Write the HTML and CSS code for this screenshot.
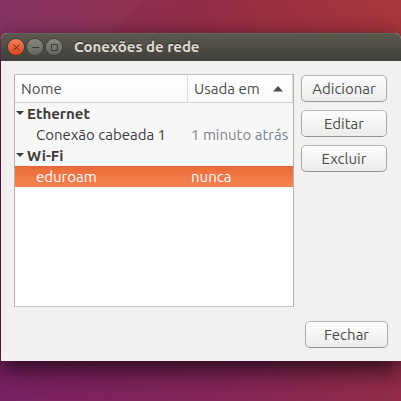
FILE: index.html
```html
<!DOCTYPE html>
<html lang="pt-BR">
<head>
<meta charset="utf-8">
<title>Conexões de rede</title>
<link rel="stylesheet" href="styles.css">
</head>
<body>
<svg class="wallpaper-ray" viewBox="0 0 143 60" aria-hidden="true"><path d="M0 0H143L83 60H0Z" fill="#fff" fill-opacity=".02"/></svg>
<main class="window">
  <header class="titlebar">
    <button class="control control-close" type="button" aria-label="Fechar janela">
      <svg viewBox="0 0 16 16"><path d="M5.500 5.500l6 6M11.500 5.500l-6 6"/></svg>
    </button>
    <button class="control" type="button" aria-label="Minimizar">
      <svg viewBox="0 0 16 16"><path d="M5 8.500h7"/></svg>
    </button>
    <button class="control" type="button" aria-label="Maximizar">
      <svg viewBox="0 0 16 16"><path d="M5.500 5.500h6v6h-6z"/></svg>
    </button>
    <h1 class="title">Conexões de rede</h1>
  </header>
  <div class="content">
    <div class="panel">
      <div class="list">
        <table class="connections">
          <colgroup><col><col class="col-used"></colgroup>
          <thead>
            <tr>
              <th scope="col">Nome</th>
              <th scope="col" aria-sort="ascending"><span class="sort">Usada em<svg viewBox="0 0 10 6"><path d="M0 5.500L5 0l5 5.500z"/></svg></span></th>
            </tr>
          </thead>
          <tbody>
            <tr class="group"><td colspan="2"><svg viewBox="0 0 8 4"><path d="M0 0h8L4 4z"/></svg>Ethernet</td></tr>
            <tr><td class="name">Conexão cabeada 1</td><td class="used">1 minuto atrás</td></tr>
            <tr class="group"><td colspan="2"><svg viewBox="0 0 8 4"><path d="M0 0h8L4 4z"/></svg>Wi-Fi</td></tr>
            <tr class="selected"><td class="name">eduroam</td><td class="used">nunca</td></tr>
          </tbody>
        </table>
      </div>
      <div class="actions">
        <button class="button" type="button">Adicionar</button>
        <button class="button" type="button">Editar</button>
        <button class="button" type="button">Excluir</button>
      </div>
    </div>
    <footer class="footer">
      <button class="button button-close" type="button">Fechar</button>
    </footer>
  </div>
</main>
</body>
</html>
```
FILE: styles.css
```css
* {
  box-sizing: border-box;
}

body {
  display: flex;
  flex-direction: column;
  min-height: 100vh;
  margin: 0;
  padding: 33px 0 40px 1px;
  overflow: hidden;
  background:
    linear-gradient(90deg, #84305f 0%, #922d47 50%, #a8353b 100%) top / 100% 62px no-repeat,
    linear-gradient(90deg, #7a2163 0%, #802556 50%, #922c48 100%);
  color: #3c3c3c;
  font: 15px/20px "Ubuntu", "Noto Sans", "Open Sans", sans-serif;
}

.wallpaper-ray {
  position: absolute;
  top: 0;
  left: 0;
  width: 143px;
  height: 60px;
}

.window {
  position: relative;
  display: flex;
  flex: 1;
  flex-direction: column;
  border-radius: 6px 6px 0 0;
  background: #f2f1f0;
  box-shadow: 0 8px 24px rgba(20, 5, 15, 0.85);
}

.titlebar {
  display: flex;
  align-items: center;
  gap: 3px;
  height: 28px;
  padding: 0 7px 1px;
  border-top: 1px solid #67655c;
  border-radius: 6px 6px 0 0;
  background: linear-gradient(#5b594f, #403f3a);
}

.control {
  width: 16px;
  height: 16px;
  padding: 0;
  border: 0;
  border-radius: 50%;
  background: linear-gradient(#888780, #65645e);
  box-shadow: 0 0 0 1px #403f39;
}

.control-close {
  background: linear-gradient(#f37f5b, #dc4717);
}

.control svg {
  display: block;
  fill: none;
  stroke: #3c3b37;
  stroke-width: 1;
}

.control-close svg {
  stroke: #4b2419;
}

.title {
  margin: 0 0 0 9px;
  color: #dfdbd2;
  font-size: 15px;
  line-height: 20px;
  text-shadow: 0 -1px #302f2b;
}

.content {
  display: flex;
  flex: 1;
  flex-direction: column;
  gap: 14px;
  padding: 13px;
}

.panel {
  display: flex;
  flex: 1;
  gap: 7px;
}

.list {
  flex: 1;
  border: 1px solid;
  border-color: #c5c3c0 #b4b2af #c9c7c5;
  background: #fff;
}

.connections {
  width: 100%;
  border-collapse: separate;
  border-spacing: 0;
  table-layout: fixed;
  background: #f7f7f7;
}

.col-used {
  width: 105px;
}

th {
  height: 28px;
  padding: 0 6px;
  border-right: 1px solid #dddcda;
  border-bottom: 1px solid #d3d2d0;
  background: linear-gradient(#fff, #f9f9f9);
  color: #4c4c4c;
  font-weight: 400;
  text-align: left;
}

.sort {
  display: flex;
  align-items: center;
  justify-content: space-between;
  padding-right: 3px;
  white-space: nowrap;
}

.sort svg {
  width: 10px;
  height: 6px;
  fill: #4c4c4c;
}

td {
  height: 21px;
  padding: 0;
  white-space: nowrap;
}

.name {
  padding-left: 21px;
}

.used {
  padding-left: 3px;
  color: #7b8490;
}

.group td {
  font-weight: 700;
}

.group svg {
  width: 8px;
  height: 4px;
  margin: 0 3px 0 1px;
  vertical-align: 4px;
  fill: #3c3c3c;
}

.selected td {
  background: linear-gradient(#e86c38, #f68353);
  box-shadow: inset 0 1px #df6331;
  color: #fff;
}

.actions {
  display: flex;
  flex-direction: column;
  gap: 8px;
  width: 86px;
  margin-right: 1px;
  padding-top: 1px;
}

.button {
  height: 27px;
  padding: 0;
  border: 1px solid;
  border-color: #bab8b5 #aaa8a5 #969491;
  border-radius: 5px;
  background: linear-gradient(#fdfdfd, #ececeb);
  color: #4c4c4c;
  font: inherit;
}

.footer {
  display: flex;
  justify-content: flex-end;
}

.button-close {
  width: 83px;
}
```
